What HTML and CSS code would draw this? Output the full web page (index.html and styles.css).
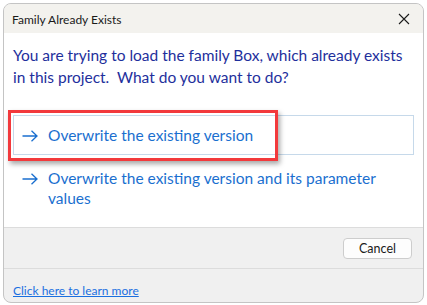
FILE: index.html
```html
<!DOCTYPE html>
<html>
<head>
<meta charset="utf-8">
<link rel="stylesheet" href="styles.css">
</head>
<body>
<div class="window">
  <div class="titlebar">
    <span class="title">Family Already Exists</span>
    <svg class="close" width="12" height="12" viewBox="0 0 12 12"><path d="M1 1L11 11M11 1L1 11" stroke="#1b1b1b" stroke-width="1.1" fill="none"/></svg>
  </div>
  <div class="content">
    <p class="message">You are trying to load the family Box, which already exists in this project.&nbsp; What do you want to do?</p>
    <div class="options">
      <div class="option option-hover">
        <svg class="arrow" width="16" height="12" viewBox="0 0 16 12"><path d="M0.5 6H15M9.5 0.8L15 6L9.5 11.2" stroke="#1a6fcf" stroke-width="1.3" fill="none"/></svg>
        <span class="option-text">Overwrite the existing version</span>
        <div class="highlight"></div>
      </div>
      <div class="option">
        <svg class="arrow" width="16" height="12" viewBox="0 0 16 12"><path d="M0.5 6H15M9.5 0.8L15 6L9.5 11.2" stroke="#1a6fcf" stroke-width="1.3" fill="none"/></svg>
        <span class="option-text">Overwrite the existing version and its parameter values</span>
      </div>
    </div>
  </div>
  <div class="footer">
    <button class="cancel">Cancel</button>
  </div>
  <div class="learn">
    <a class="learn-link" href="#">Click here to learn more</a>
  </div>
</div>
</body>
</html>
```
FILE: styles.css
```css
html, body {
  margin: 0;
  padding: 0;
  background: #ffffff;
}
body {
  width: 427px;
  height: 305px;
  overflow: hidden;
  font-family: Lato, "Noto Sans", sans-serif;
}
.window {
  margin: 3px 0 0 3px;
  width: 419px;
  height: 298px;
  border: 1px solid #c4c4c4;
  border-radius: 8px;
  overflow: hidden;
  display: flex;
  flex-direction: column;
  background: #f0f0f0;
}
.titlebar {
  height: 29px;
  flex: none;
  background: #f3f2ee;
  display: flex;
  align-items: center;
  justify-content: space-between;
  padding: 0 13px 0 8px;
}
.title {
  font-size: 12px;
  color: #1a1a1a;
  margin-top: 1px;
}
.close {
  display: block;
  margin-top: 1px;
}
.content {
  background: #ffffff;
  height: 195px;
  flex: none;
  padding: 0 9px 0 9px;
  box-sizing: border-box;
  border-bottom: 1px solid #dcdcdc;
}
.message {
  margin: 11px 0 0 0;
  font-size: 15.5px;
  line-height: 22px;
  color: #1e2f9c;
}
.options {
  margin-top: 27px;
  display: flex;
  flex-direction: column;
}
.option {
  position: relative;
  display: flex;
  align-items: flex-start;
  padding: 9px 0 0 8px;
  height: 40px;
  box-sizing: border-box;
  border: 1px solid transparent;
}
.option-hover {
  border-color: #c6d9ea;
}
.arrow {
  flex: none;
  margin-top: 5px;
  margin-right: 10px;
}
.option-text {
  font-size: 15.5px;
  line-height: 20px;
  color: #1a6fcf;
  padding-right: 10px;
}
.option + .option {
  height: auto;
  padding-top: 12px;
}
.highlight {
  position: absolute;
  left: -6px;
  top: -6px;
  width: 264px;
  height: 45px;
  border: 3px solid #f2393c;
  box-shadow: 2px 3px 5px rgba(0, 0, 0, 0.35);
  pointer-events: none;
}
.footer {
  height: 40px;
  flex: none;
  display: flex;
  justify-content: flex-end;
  align-items: center;
  padding-right: 11px;
  border-bottom: 1px solid #dcdcdc;
}
.cancel {
  width: 69px;
  height: 21px;
  background: #fdfdfd;
  border: 1px solid #cdcdcd;
  border-radius: 4px;
  font-family: Lato, "Noto Sans", sans-serif;
  font-size: 12.5px;
  color: #1a1a1a;
  padding: 0;
}
.learn {
  flex: 1;
  padding: 10px 0 0 9px;
}
.learn-link {
  font-size: 12px;
  color: #1a6fe0;
  text-decoration: underline;
}
```
